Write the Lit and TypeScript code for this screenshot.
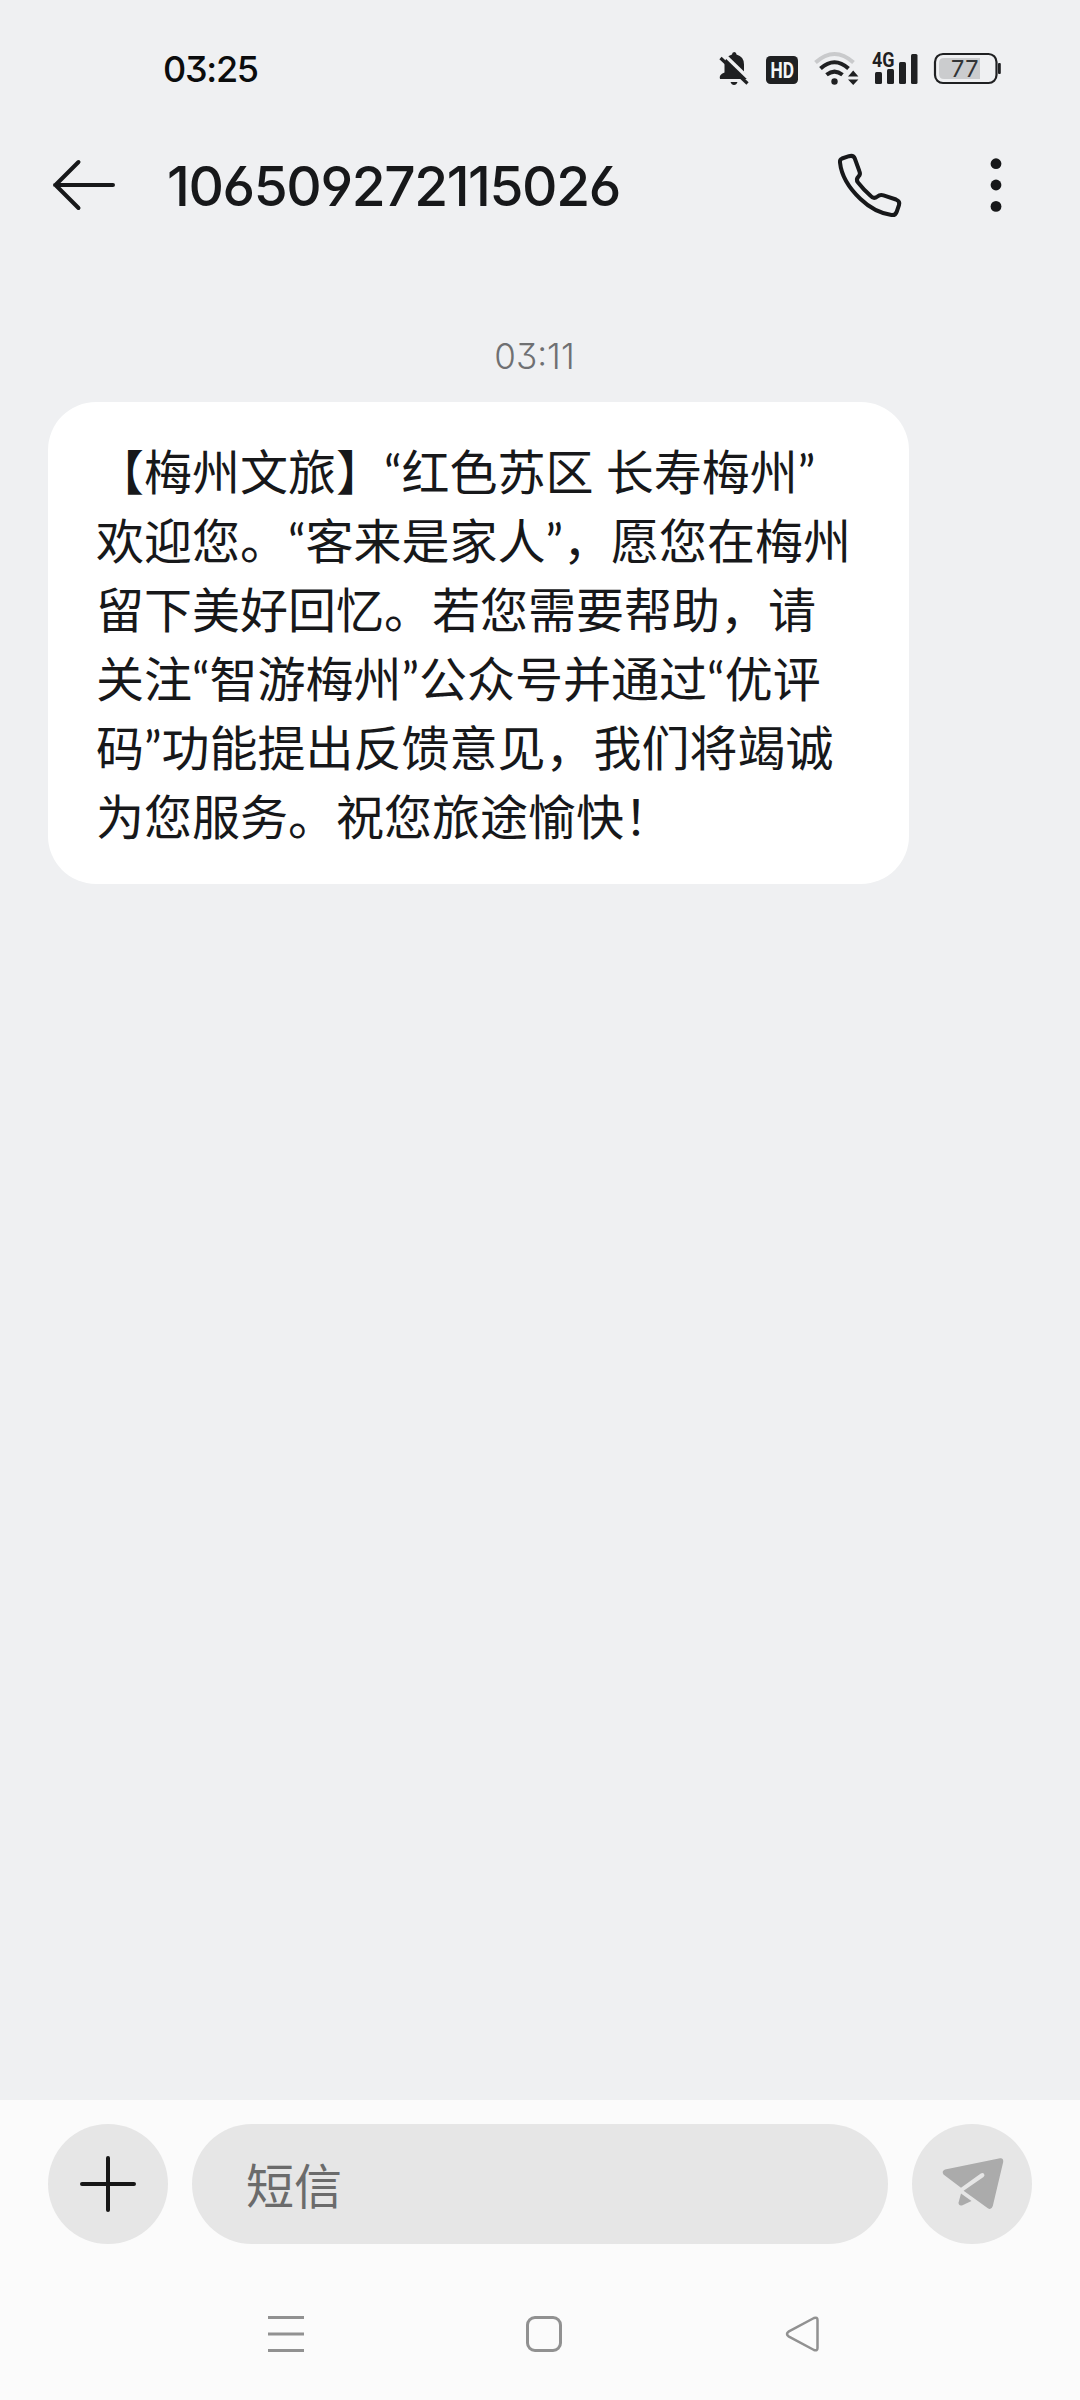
import { LitElement, html, css, svg } from "lit";
import { customElement, property } from "lit/decorators.js";

@customElement("status-bar")
class StatusBar extends LitElement {
  @property() time = "";
  @property({ type: Number }) battery = 0;

  static styles = css`
    :host {
      display: flex;
      align-items: center;
      justify-content: space-between;
      height: 138px;
      padding: 0 76px 0 163px;
      box-sizing: border-box;
    }
    .time {
      font-size: 36px;
      font-weight: 500;
      line-height: 44px;
      letter-spacing: -1.3px;
      color: #0b0c0d;
    }
    svg { display: block; }
    .hd { font: 700 22px Roboto, sans-serif; fill: #f4f5f7; }
    .net { font: 700 21px Roboto, sans-serif; fill: #1f2022; }
    .level { font: 400 23.5px Inter, sans-serif; fill: #333436; }
  `;

  render() {
    return html`
      <span class="time">${this.time}</span>
      <svg width="290" height="40" viewBox="714 49 290 40" fill="#1f2022">
        <path d="M732 54.5Q732 52 734.300 52Q736.500 52 736.500 54.500Q744 56.500 744 64.500V72L748.500 76.500V79H720Q718.500 74.500 724.500 72.500V64.500Q724.500 57 732 54.500Z"/>
        <path d="M730.500 82H737.500Q736.500 85 734 85T730.500 82Z"/>
        <path d="M719 54L752 86" stroke="#eff0f2" stroke-width="3.500" transform="translate(2.200 -2.200)"/>
        <path d="M720.500 58L747.500 83.500" stroke="#1f2022" stroke-width="3.200"/>
        <rect x="766" y="56" width="32" height="28" rx="4.500"/>
        <text class="hd" x="770.500" y="78" textLength="23.500" lengthAdjust="spacingAndGlyphs">HD</text>
        <g fill="none" stroke-width="4">
          <path d="M815.500 62.500Q834.500 45.500 853.500 62.500" stroke="#c9cacc"/>
          <path d="M820.500 68.500Q834.500 56 848.500 68.500" stroke="#1f2022"/>
          <path d="M826.500 74.800Q834.500 68.500 842.500 74.800" stroke="#1f2022"/>
        </g>
        <circle cx="834.500" cy="81.500" r="3.200"/>
        <path d="M848 76.500L853.200 70.500L858.400 76.500ZM848 79.500H858.400L853.200 85Z"/>
        <text class="net" x="872" y="67.200" textLength="22.500" lengthAdjust="spacingAndGlyphs">4G</text>
        <rect x="875" y="72" width="7" height="12" rx="1.500"/>
        <rect x="887" y="69" width="7" height="15" rx="1.500"/>
        <rect x="899" y="62" width="7" height="22" rx="1.500"/>
        <rect x="911" y="54" width="6.500" height="30" rx="1.500"/>
        <rect x="935" y="54" width="61.500" height="29" rx="8" fill="none" stroke="#1f2022" stroke-width="2.200"/>
        <path d="M980 58V79H944Q939 79 939 74V63Q939 58 944 58Z" fill="#cbccce"/>
        <rect x="998" y="63" width="2.800" height="11" rx="1"/>
        <text class="level" x="951" y="77" textLength="27.500">${this.battery}</text>
      </svg>
    `;
  }
}

@customElement("chat-header")
class ChatHeader extends LitElement {
  @property() name = "";

  static styles = css`
    :host {
      display: flex;
      align-items: center;
      height: 94px;
      padding: 0 68px 0 48px;
      box-sizing: border-box;
    }
    svg { display: block; flex: none; }
    .title {
      flex: 1;
      margin: 0;
      padding: 2px 0 0 47px;
      font-size: 55px;
      line-height: 66px;
      font-weight: 500;
      letter-spacing: -1.4px;
      color: #17181a;
      white-space: nowrap;
    }
    .call { margin-right: 75px; }
  `;

  render() {
    return html`
      <svg width="72" height="72" viewBox="48 149 72 72" fill="none" stroke="#17181a" stroke-width="4" stroke-linecap="round" stroke-linejoin="round">
        <path d="M113 185H55M78.500 162L55.500 185L78.500 208"/>
      </svg>
      <h1 class="title">${this.name}</h1>
      <svg class="call" width="72" height="72" viewBox="833 149 72 72" fill="none" stroke="#17181a" stroke-width="4" stroke-linejoin="round">
        <path d="M842 158.500L849 156.200Q853.500 155 854.800 158.500L859.500 171.500Q860.700 174.500 858.500 176.500Q855.500 179.500 858 182.500Q863.500 189.500 870.500 195.800Q873.600 199.500 877.500 196.500Q880 194.200 883.500 195.300L896 199.500Q900.300 201.200 899 205L896.800 211.500Q895.500 215.600 891.500 215Q874.500 212.500 860.500 199Q842 181.500 840 162.500Q839.600 159.500 842 158.500Z"/>
      </svg>
      <svg width="32" height="72" viewBox="980 149 32 72" fill="#17181a">
        <circle cx="996" cy="163.700" r="5.400"/>
        <circle cx="996" cy="185" r="5.400"/>
        <circle cx="996" cy="206.400" r="5.400"/>
      </svg>
    `;
  }
}

@customElement("chat-message")
class ChatMessage extends LitElement {
  @property() time = "";
  @property({ attribute: false }) lines: string[] = [];

  static styles = css`
    :host { display: block; padding: 0 48px; }
    .time {
      font-size: 35px;
      font-weight: 300;
      line-height: 44px;
      color: #6f7072;
      text-align: center;
      padding-right: 11px;
    }
    .bubble {
      box-sizing: border-box;
      width: 861px;
      margin-top: 24px;
      padding: 35px 48px 33px;
      border-radius: 48px;
      background: #fff;
      color: #17181a;
      font-size: 48px;
      line-height: 69px;
      font-family: Lato, "Noto Sans CJK SC", sans-serif;
      text-spacing-trim: space-all;
    }
    .line { display: block; height: 69px; white-space: pre; }
  `;

  render() {
    return html`
      <div class="time">${this.time}</div>
      <div class="bubble">${this.lines.map((l) => html`<span class="line">${l}</span>`)}</div>
    `;
  }
}

@customElement("chat-composer")
class ChatComposer extends LitElement {
  @property() placeholder = "";

  static styles = css`
    :host {
      display: flex;
      gap: 24px;
      padding: 24px 48px 0;
      height: 120px;
    }
    .round, .field {
      display: flex;
      align-items: center;
      height: 120px;
      border-radius: 60px;
      background: #e6e6e6;
    }
    .round { width: 120px; flex: none; justify-content: center; }
    .field {
      flex: 1;
      box-sizing: border-box;
      padding: 5px 54px 0;
      font-size: 48px;
      line-height: 70px;
      color: #6b6b6b;
    }
  `;

  render() {
    return html`
      <div class="round">
        <svg width="120" height="120" viewBox="0 0 120 120" stroke="#171717" stroke-width="4" stroke-linecap="round">
          <path d="M34 60H86M60 34V86" />
        </svg>
      </div>
      <div class="field"><span>${this.placeholder}</span></div>
      <div class="round">
        <svg width="120" height="120" viewBox="912 2124 120 120" fill="#ababab">
          <path d="M945 2169.500L1000 2158.200Q1003.600 2157.600 1003.200 2162L992.800 2206Q991.300 2210.500 987.500 2208L963.600 2190.800L983.500 2177Q985.200 2175.500 984 2173.700Q982.700 2172.200 980.800 2173.500L961 2187.800L943.500 2174.500Q941.300 2171 945 2169.500Z"/>
          <path d="M961 2193.500L971.500 2201L962.500 2205.300Q958.800 2206.500 958.500 2202.800Z"/>
        </svg>
      </div>
    `;
  }
}

const navIcons = [
  svg`<path d="M2 3.500H38M2 20H38M2 36.500H38"/>`,
  svg`<rect x="3.500" y="3.500" width="33" height="33" rx="7.500"/>`,
  svg`<path d="M6.500 17.700L32 4Q35.500 2.800 35.500 6V34Q35.500 37.200 32 36L6.500 22.300Q3.500 20 6.500 17.700Z" stroke-width="2.500"/>`,
];

@customElement("nav-bar")
class NavBar extends LitElement {
  static styles = css`
    :host {
      display: flex;
      justify-content: center;
      gap: 218px;
      padding: 70px 0 0 8px;
    }
    svg { display: block; }
  `;

  render() {
    return navIcons.map(
      (icon) => html`<svg width="40" height="40" viewBox="0 0 40 40" fill="none" stroke="#919191" stroke-width="3" stroke-linejoin="round">${icon}</svg>`
    );
  }
}

@customElement("app-root")
class AppRoot extends LitElement {
  static styles = css`
    :host {
      display: flex;
      flex-direction: column;
      width: 1080px;
      height: 2400px;
      background: #eff0f2;
      font-family: Inter, "Noto Sans CJK SC", sans-serif;
      font-feature-settings: "cv03", "cv04", "cv09";
    }
    .thread { flex: 1; padding-top: 102px; }
    .bottom { height: 300px; background: #fbfbfb; }
  `;

  private lines = [
    "【梅州文旅】“红色苏区 长寿梅州”",
    "欢迎您。“客来是家人”，愿您在梅州",
    "留下美好回忆。若您需要帮助，请",
    "关注“智游梅州”公众号并通过“优评",
    "码”功能提出反馈意见，我们将竭诚",
    "为您服务。祝您旅途愉快！",
  ];

  render() {
    return html`
      <status-bar time="03:25" battery="77"></status-bar>
      <chat-header name="106509272115026"></chat-header>
      <main class="thread">
        <chat-message time="03:11" .lines=${this.lines}></chat-message>
      </main>
      <footer class="bottom">
        <chat-composer placeholder="短信"></chat-composer>
        <nav-bar></nav-bar>
      </footer>
    `;
  }
}
